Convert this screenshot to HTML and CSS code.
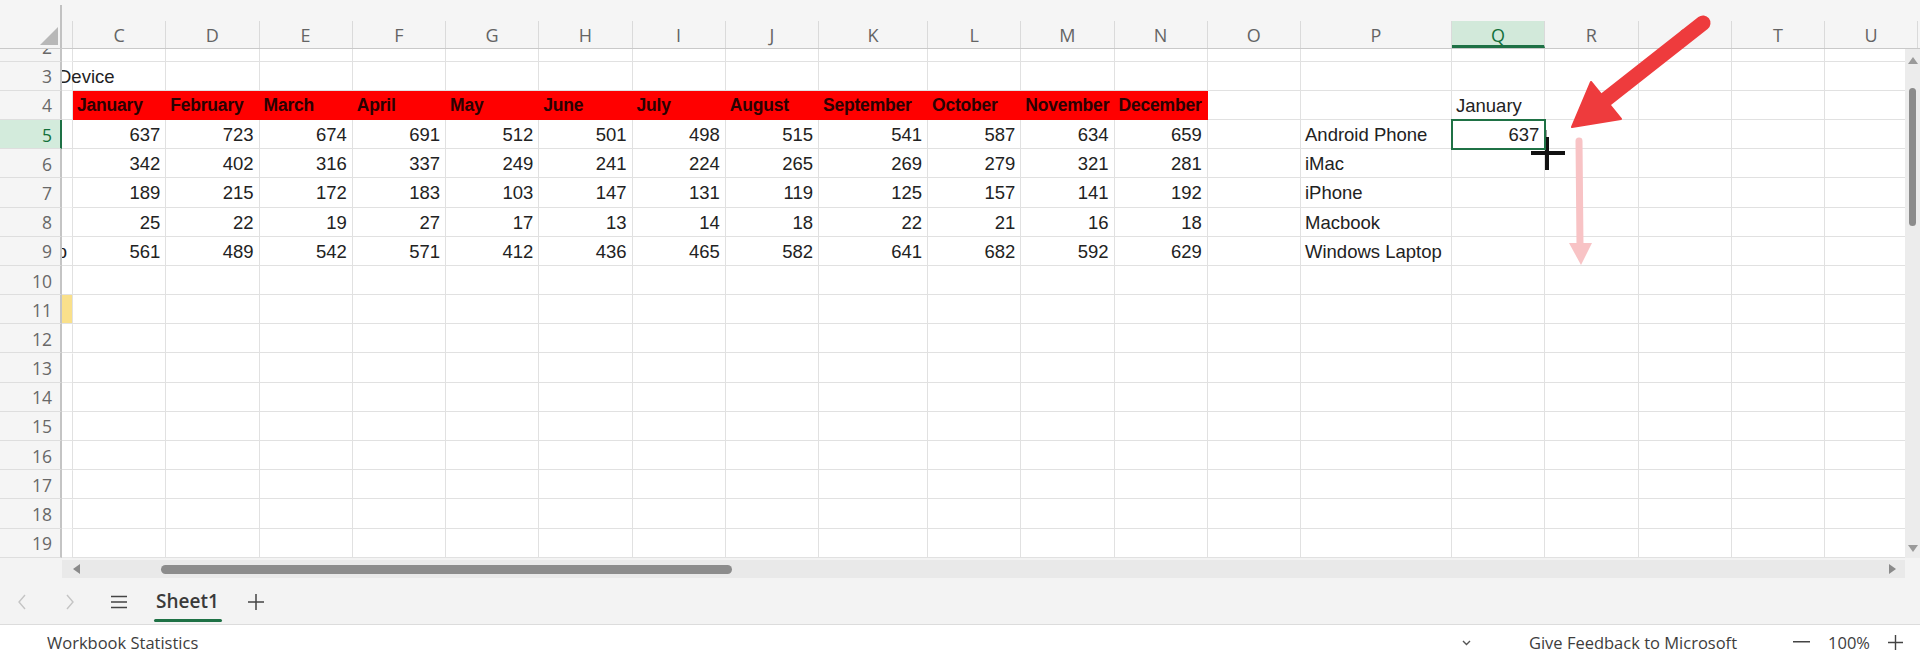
FILE: index.html
```html
<!DOCTYPE html>
<html lang="en">
<head>
<meta charset="utf-8">
<title>Workbook</title>
<link rel="stylesheet" href="styles.css">
</head>
<body>
<div class="app">
  <div class="colhead">
    <div class="corner"><svg width="18" height="18" viewBox="0 0 18 18"><polygon points="18,0 18,18 0,18" fill="#b8b8b8"/></svg></div>
    <div class="ch"></div>
    <div class="ch">C</div><div class="ch">D</div><div class="ch">E</div><div class="ch">F</div><div class="ch">G</div><div class="ch">H</div><div class="ch">I</div><div class="ch">J</div><div class="ch">K</div><div class="ch">L</div><div class="ch">M</div><div class="ch">N</div><div class="ch">O</div><div class="ch">P</div><div class="ch sel">Q</div><div class="ch">R</div><div class="ch">S</div><div class="ch">T</div><div class="ch">U</div>
  </div>

  <div class="main">
    <div class="rows">
      <div class="rows-inner">
        <div class="r"><div class="rh">2</div><div class="c b"></div><div class="c"></div><div class="c"></div><div class="c"></div><div class="c"></div><div class="c"></div><div class="c"></div><div class="c"></div><div class="c"></div><div class="c"></div><div class="c"></div><div class="c"></div><div class="c"></div><div class="c"></div><div class="c"></div><div class="c"></div><div class="c"></div><div class="c"></div><div class="c"></div><div class="c"></div></div>

        <div class="r"><div class="rh">3</div><div class="c b"><span class="spill">Device</span></div><div class="c"></div><div class="c"></div><div class="c"></div><div class="c"></div><div class="c"></div><div class="c"></div><div class="c"></div><div class="c"></div><div class="c"></div><div class="c"></div><div class="c"></div><div class="c"></div><div class="c"></div><div class="c"></div><div class="c"></div><div class="c"></div><div class="c"></div><div class="c"></div><div class="c"></div></div>

        <div class="r"><div class="rh">4</div><div class="c b"></div><div class="c m">January</div><div class="c m">February</div><div class="c m">March</div><div class="c m">April</div><div class="c m">May</div><div class="c m">June</div><div class="c m">July</div><div class="c m">August</div><div class="c m">September</div><div class="c m">October</div><div class="c m">November</div><div class="c m">December</div><div class="c"></div><div class="c"></div><div class="c">January</div><div class="c"></div><div class="c"></div><div class="c"></div><div class="c"></div></div>

        <div class="r"><div class="rh sel">5</div><div class="c b"></div><div class="c n">637</div><div class="c n">723</div><div class="c n">674</div><div class="c n">691</div><div class="c n">512</div><div class="c n">501</div><div class="c n">498</div><div class="c n">515</div><div class="c n">541</div><div class="c n">587</div><div class="c n">634</div><div class="c n">659</div><div class="c"></div><div class="c">Android Phone</div><div class="c n active">637</div><div class="c"></div><div class="c"></div><div class="c"></div><div class="c"></div></div>

        <div class="r"><div class="rh">6</div><div class="c b"></div><div class="c n">342</div><div class="c n">402</div><div class="c n">316</div><div class="c n">337</div><div class="c n">249</div><div class="c n">241</div><div class="c n">224</div><div class="c n">265</div><div class="c n">269</div><div class="c n">279</div><div class="c n">321</div><div class="c n">281</div><div class="c"></div><div class="c">iMac</div><div class="c"></div><div class="c"></div><div class="c"></div><div class="c"></div><div class="c"></div></div>

        <div class="r"><div class="rh">7</div><div class="c b"></div><div class="c n">189</div><div class="c n">215</div><div class="c n">172</div><div class="c n">183</div><div class="c n">103</div><div class="c n">147</div><div class="c n">131</div><div class="c n">119</div><div class="c n">125</div><div class="c n">157</div><div class="c n">141</div><div class="c n">192</div><div class="c"></div><div class="c">iPhone</div><div class="c"></div><div class="c"></div><div class="c"></div><div class="c"></div><div class="c"></div></div>

        <div class="r"><div class="rh">8</div><div class="c b"></div><div class="c n">25</div><div class="c n">22</div><div class="c n">19</div><div class="c n">27</div><div class="c n">17</div><div class="c n">13</div><div class="c n">14</div><div class="c n">18</div><div class="c n">22</div><div class="c n">21</div><div class="c n">16</div><div class="c n">18</div><div class="c"></div><div class="c">Macbook</div><div class="c"></div><div class="c"></div><div class="c"></div><div class="c"></div><div class="c"></div></div>

        <div class="r"><div class="rh">9</div><div class="c b end"><span class="spill">p</span></div><div class="c n">561</div><div class="c n">489</div><div class="c n">542</div><div class="c n">571</div><div class="c n">412</div><div class="c n">436</div><div class="c n">465</div><div class="c n">582</div><div class="c n">641</div><div class="c n">682</div><div class="c n">592</div><div class="c n">629</div><div class="c"></div><div class="c">Windows Laptop</div><div class="c"></div><div class="c"></div><div class="c"></div><div class="c"></div><div class="c"></div></div>

        <div class="r"><div class="rh">10</div><div class="c b"></div><div class="c"></div><div class="c"></div><div class="c"></div><div class="c"></div><div class="c"></div><div class="c"></div><div class="c"></div><div class="c"></div><div class="c"></div><div class="c"></div><div class="c"></div><div class="c"></div><div class="c"></div><div class="c"></div><div class="c"></div><div class="c"></div><div class="c"></div><div class="c"></div><div class="c"></div></div>

        <div class="r"><div class="rh">11</div><div class="c b yellow"></div><div class="c"></div><div class="c"></div><div class="c"></div><div class="c"></div><div class="c"></div><div class="c"></div><div class="c"></div><div class="c"></div><div class="c"></div><div class="c"></div><div class="c"></div><div class="c"></div><div class="c"></div><div class="c"></div><div class="c"></div><div class="c"></div><div class="c"></div><div class="c"></div><div class="c"></div></div>

        <div class="r"><div class="rh">12</div><div class="c b"></div><div class="c"></div><div class="c"></div><div class="c"></div><div class="c"></div><div class="c"></div><div class="c"></div><div class="c"></div><div class="c"></div><div class="c"></div><div class="c"></div><div class="c"></div><div class="c"></div><div class="c"></div><div class="c"></div><div class="c"></div><div class="c"></div><div class="c"></div><div class="c"></div><div class="c"></div></div>

        <div class="r"><div class="rh">13</div><div class="c b"></div><div class="c"></div><div class="c"></div><div class="c"></div><div class="c"></div><div class="c"></div><div class="c"></div><div class="c"></div><div class="c"></div><div class="c"></div><div class="c"></div><div class="c"></div><div class="c"></div><div class="c"></div><div class="c"></div><div class="c"></div><div class="c"></div><div class="c"></div><div class="c"></div><div class="c"></div></div>

        <div class="r"><div class="rh">14</div><div class="c b"></div><div class="c"></div><div class="c"></div><div class="c"></div><div class="c"></div><div class="c"></div><div class="c"></div><div class="c"></div><div class="c"></div><div class="c"></div><div class="c"></div><div class="c"></div><div class="c"></div><div class="c"></div><div class="c"></div><div class="c"></div><div class="c"></div><div class="c"></div><div class="c"></div><div class="c"></div></div>

        <div class="r"><div class="rh">15</div><div class="c b"></div><div class="c"></div><div class="c"></div><div class="c"></div><div class="c"></div><div class="c"></div><div class="c"></div><div class="c"></div><div class="c"></div><div class="c"></div><div class="c"></div><div class="c"></div><div class="c"></div><div class="c"></div><div class="c"></div><div class="c"></div><div class="c"></div><div class="c"></div><div class="c"></div><div class="c"></div></div>

        <div class="r"><div class="rh">16</div><div class="c b"></div><div class="c"></div><div class="c"></div><div class="c"></div><div class="c"></div><div class="c"></div><div class="c"></div><div class="c"></div><div class="c"></div><div class="c"></div><div class="c"></div><div class="c"></div><div class="c"></div><div class="c"></div><div class="c"></div><div class="c"></div><div class="c"></div><div class="c"></div><div class="c"></div><div class="c"></div></div>

        <div class="r"><div class="rh">17</div><div class="c b"></div><div class="c"></div><div class="c"></div><div class="c"></div><div class="c"></div><div class="c"></div><div class="c"></div><div class="c"></div><div class="c"></div><div class="c"></div><div class="c"></div><div class="c"></div><div class="c"></div><div class="c"></div><div class="c"></div><div class="c"></div><div class="c"></div><div class="c"></div><div class="c"></div><div class="c"></div></div>

        <div class="r"><div class="rh">18</div><div class="c b"></div><div class="c"></div><div class="c"></div><div class="c"></div><div class="c"></div><div class="c"></div><div class="c"></div><div class="c"></div><div class="c"></div><div class="c"></div><div class="c"></div><div class="c"></div><div class="c"></div><div class="c"></div><div class="c"></div><div class="c"></div><div class="c"></div><div class="c"></div><div class="c"></div><div class="c"></div></div>

        <div class="r"><div class="rh">19</div><div class="c b"></div><div class="c"></div><div class="c"></div><div class="c"></div><div class="c"></div><div class="c"></div><div class="c"></div><div class="c"></div><div class="c"></div><div class="c"></div><div class="c"></div><div class="c"></div><div class="c"></div><div class="c"></div><div class="c"></div><div class="c"></div><div class="c"></div><div class="c"></div><div class="c"></div><div class="c"></div></div>
      </div>
    </div>
    <div class="vsb">
      <svg class="arr" width="10" height="7" viewBox="0 0 10 7"><polygon points="5,0 10,7 0,7" fill="#9a9a9a"/></svg>
      <div class="vthumb"></div>
      <div class="grow"></div>
      <svg class="arr" width="10" height="7" viewBox="0 0 10 7"><polygon points="0,0 10,0 5,7" fill="#9a9a9a"/></svg>
    </div>
  </div>

  <div class="hsb">
    <div class="hsb-pad"></div>
    <div class="track">
      <svg class="larr" width="7" height="10" viewBox="0 0 7 10"><polygon points="0,5 7,0 7,10" fill="#8a8a8a"/></svg>
      <div class="hthumb"></div>
      <div class="grow"></div>
      <svg class="rarr" width="7" height="10" viewBox="0 0 7 10"><polygon points="0,0 7,5 0,10" fill="#8a8a8a"/></svg>
    </div>
    <div class="hsb-corner"></div>
  </div>

  <div class="tabs">
    <svg class="nav first" width="10" height="16" viewBox="0 0 10 16"><polyline points="8,1 2,8 8,15" fill="none" stroke="#c4c4c4" stroke-width="1.4"/></svg>
    <svg class="nav" width="10" height="16" viewBox="0 0 10 16"><polyline points="2,1 8,8 2,15" fill="none" stroke="#c4c4c4" stroke-width="1.4"/></svg>
    <svg class="menu" width="18" height="14" viewBox="0 0 18 14"><path d="M1 1.5H17M1 7H17M1 12.5H17" stroke="#444" stroke-width="1.6" fill="none"/></svg>
    <div class="tab">Sheet1</div>
    <svg class="add" width="16" height="16" viewBox="0 0 16 16"><path d="M8 0V16M0 8H16" stroke="#444" stroke-width="1.5" fill="none"/></svg>
  </div>

  <div class="status">
    <div class="stat">Workbook Statistics</div>
    <div class="grow"></div>
    <svg class="chev" width="9" height="6" viewBox="0 0 9 6"><polyline points="1,1 4.5,4.5 8,1" fill="none" stroke="#555" stroke-width="1.4"/></svg>
    <div class="feedback">Give Feedback to Microsoft</div>
    <svg class="minus" width="17" height="2" viewBox="0 0 17 2"><rect width="17" height="1.5" fill="#444"/></svg>
    <div class="zoom">100%</div>
    <svg class="plus" width="15" height="15" viewBox="0 0 15 15"><path d="M7.5 0V15M0 7.5H15" stroke="#444" stroke-width="1.4" fill="none"/></svg>
  </div>
</div>

<svg class="overlay" width="1920" height="659" viewBox="0 0 1920 659">
  <line x1="1579" y1="141" x2="1580" y2="246" stroke="#f8c3c5" stroke-width="7" stroke-linecap="round"/>
  <polygon points="1569,243 1592,243 1581,265" fill="#f8c3c5"/>
  <line x1="1703" y1="23" x2="1600" y2="104" stroke="#ee3b3d" stroke-width="15" stroke-linecap="round"/>
  <polygon points="1572,127 1591,82 1621,119" fill="#ee3b3d" stroke="#ee3b3d" stroke-width="2" stroke-linejoin="round"/>
  <rect x="1545" y="130" width="2" height="16" fill="#9a9a9a"/>
  <rect x="1531" y="151" width="34" height="4" fill="#111"/>
  <rect x="1545" y="137" width="4" height="33" fill="#111"/>
</svg>
</body>
</html>
```

FILE: styles.css
```css
* {
  box-sizing: border-box;
  margin: 0;
  padding: 0;
}

html, body {
  width: 1920px;
  height: 659px;
  overflow: hidden;
  background: #ffffff;
}

body {
  font-family: "Open Sans", "Liberation Sans", sans-serif;
  position: relative;
  color: #333;
}

.app {
  --tpl: 62px 11px repeat(8, 93.25px) 109px repeat(4, 93.25px) 151px repeat(5, 93.25px);
  display: flex;
  flex-direction: column;
  height: 659px;
}

.grow {
  flex: 1;
}

/* column header */
.colhead {
  display: grid;
  grid-template-columns: var(--tpl);
  height: 49px;
  background: #f5f5f5;
  border-bottom: 1px solid #c9c9c9;
  align-items: end;
  overflow: hidden;
}

.corner {
  align-self: stretch;
  margin-top: 5px;
  border-right: 2px solid #c2c2c2;
  display: flex;
  justify-content: flex-end;
  align-items: flex-end;
  padding: 0 2px 3px 0;
}

.ch {
  height: 27px;
  border-right: 1px solid #dadada;
  display: flex;
  align-items: center;
  justify-content: center;
  font-size: 18px;
  color: #646464;
  padding-top: 1px;
}

.ch.sel {
  background: #d2e9da;
  color: #14703c;
  border-bottom: 3px solid #1e7145;
  padding-top: 3px;
}

/* grid body */
.main {
  display: flex;
  height: 509px;
}

.rows {
  flex: 1;
  overflow: hidden;
}

.rows-inner {
  margin-top: -16.6px;
}

.r {
  display: grid;
  grid-template-columns: var(--tpl);
  height: 29.2px;
}

.rh {
  position: relative;
  z-index: 2;
  background: #f5f5f5;
  border-right: 2px solid #c4c4c4;
  border-bottom: 1px solid #dedede;
  color: #686868;
  font-size: 17.5px;
  display: flex;
  justify-content: flex-end;
  align-items: center;
  padding: 1px 8px 0 0;
}

.rh.sel {
  background: #d3ebdc;
  color: #12703b;
  border-right: 2px solid #1e7145;
}

.c {
  border-right: 1px solid #e1e1e1;
  border-bottom: 1px solid #e1e1e1;
  font-family: "Liberation Sans", Arial, sans-serif;
  font-size: 18.5px;
  color: #222;
  display: flex;
  align-items: center;
  padding: 2px 4px 0;
  white-space: nowrap;
  min-width: 0;
  overflow: hidden;
}

.c.n {
  justify-content: flex-end;
  padding-right: 5px;
}

.c.m {
  background: #ff0000;
  border-color: #ff0000;
  font-weight: 700;
  font-size: 17.5px;
  letter-spacing: -0.2px;
  color: #2a0202;
  overflow: visible;
}

.c.b {
  overflow: visible;
  clip-path: inset(0 -400px 0 0);
  padding: 2px 0 0 0;
}

.c.b .spill {
  flex-shrink: 0;
  margin-left: -4px;
}

.c.b.end {
  justify-content: flex-end;
  padding-right: 5px;
}

.c.b.end .spill {
  margin-left: 0;
}

.c.yellow {
  background: #f9e08b;
}

.c.active {
  position: relative;
  z-index: 1;
  outline: 2px solid #1f7145;
  outline-offset: -1px;
}

/* vertical scrollbar */
.vsb {
  width: 15px;
  background: #ececec;
  display: flex;
  flex-direction: column;
  align-items: center;
  padding: 8px 0 6px;
}

.vthumb {
  margin-top: 24px;
  width: 7px;
  height: 138px;
  border-radius: 4px;
  background: #8c8c8c;
}

/* horizontal scrollbar */
.hsb {
  display: flex;
  height: 22px;
  background: #f3f3f3;
}

.hsb-pad {
  width: 62px;
}

.track {
  flex: 1;
  display: flex;
  align-items: center;
  background: #e9e9e9;
  margin: 2px 0;
}

.larr {
  margin-left: 11px;
}

.hthumb {
  margin-left: 81px;
  width: 571px;
  height: 9px;
  border-radius: 5px;
  background: #8c8c8c;
}

.rarr {
  margin-right: 9px;
}

.hsb-corner {
  width: 15px;
  background: #f3f3f3;
}

/* sheet tabs */
.tabs {
  height: 45px;
  background: #f3f3f3;
  border-bottom: 1px solid #dcdcdc;
  display: flex;
  align-items: center;
}

.nav.first {
  margin-left: 17px;
}

.nav {
  margin-left: 38px;
}

.menu {
  margin-left: 35px;
}

.tab {
  margin-left: 28px;
  align-self: stretch;
  display: flex;
  align-items: center;
  font-size: 19px;
  font-weight: 600;
  color: #3a3a3a;
  padding-top: 1px;
  border-bottom: 3px solid transparent;
  position: relative;
}

.tab::after {
  content: "";
  position: absolute;
  left: -2px;
  right: -3px;
  bottom: -1px;
  height: 3px;
  border-radius: 2px;
  background: #1e7145;
}

.add {
  margin-left: 29px;
}

/* status bar */
.status {
  height: 34px;
  background: #ffffff;
  display: flex;
  align-items: center;
  font-size: 16.5px;
  color: #3d3d3d;
}

.stat {
  margin-left: 47px;
}

.chev {
  margin-right: 58px;
  margin-top: 2px;
}

.feedback {
  margin-right: 56px;
}

.minus {
  margin-right: 18px;
}

.zoom {
  margin-right: 18px;
}

.plus {
  margin-right: 17px;
}

.overlay {
  position: absolute;
  left: 0;
  top: 0;
  pointer-events: none;
}
```
